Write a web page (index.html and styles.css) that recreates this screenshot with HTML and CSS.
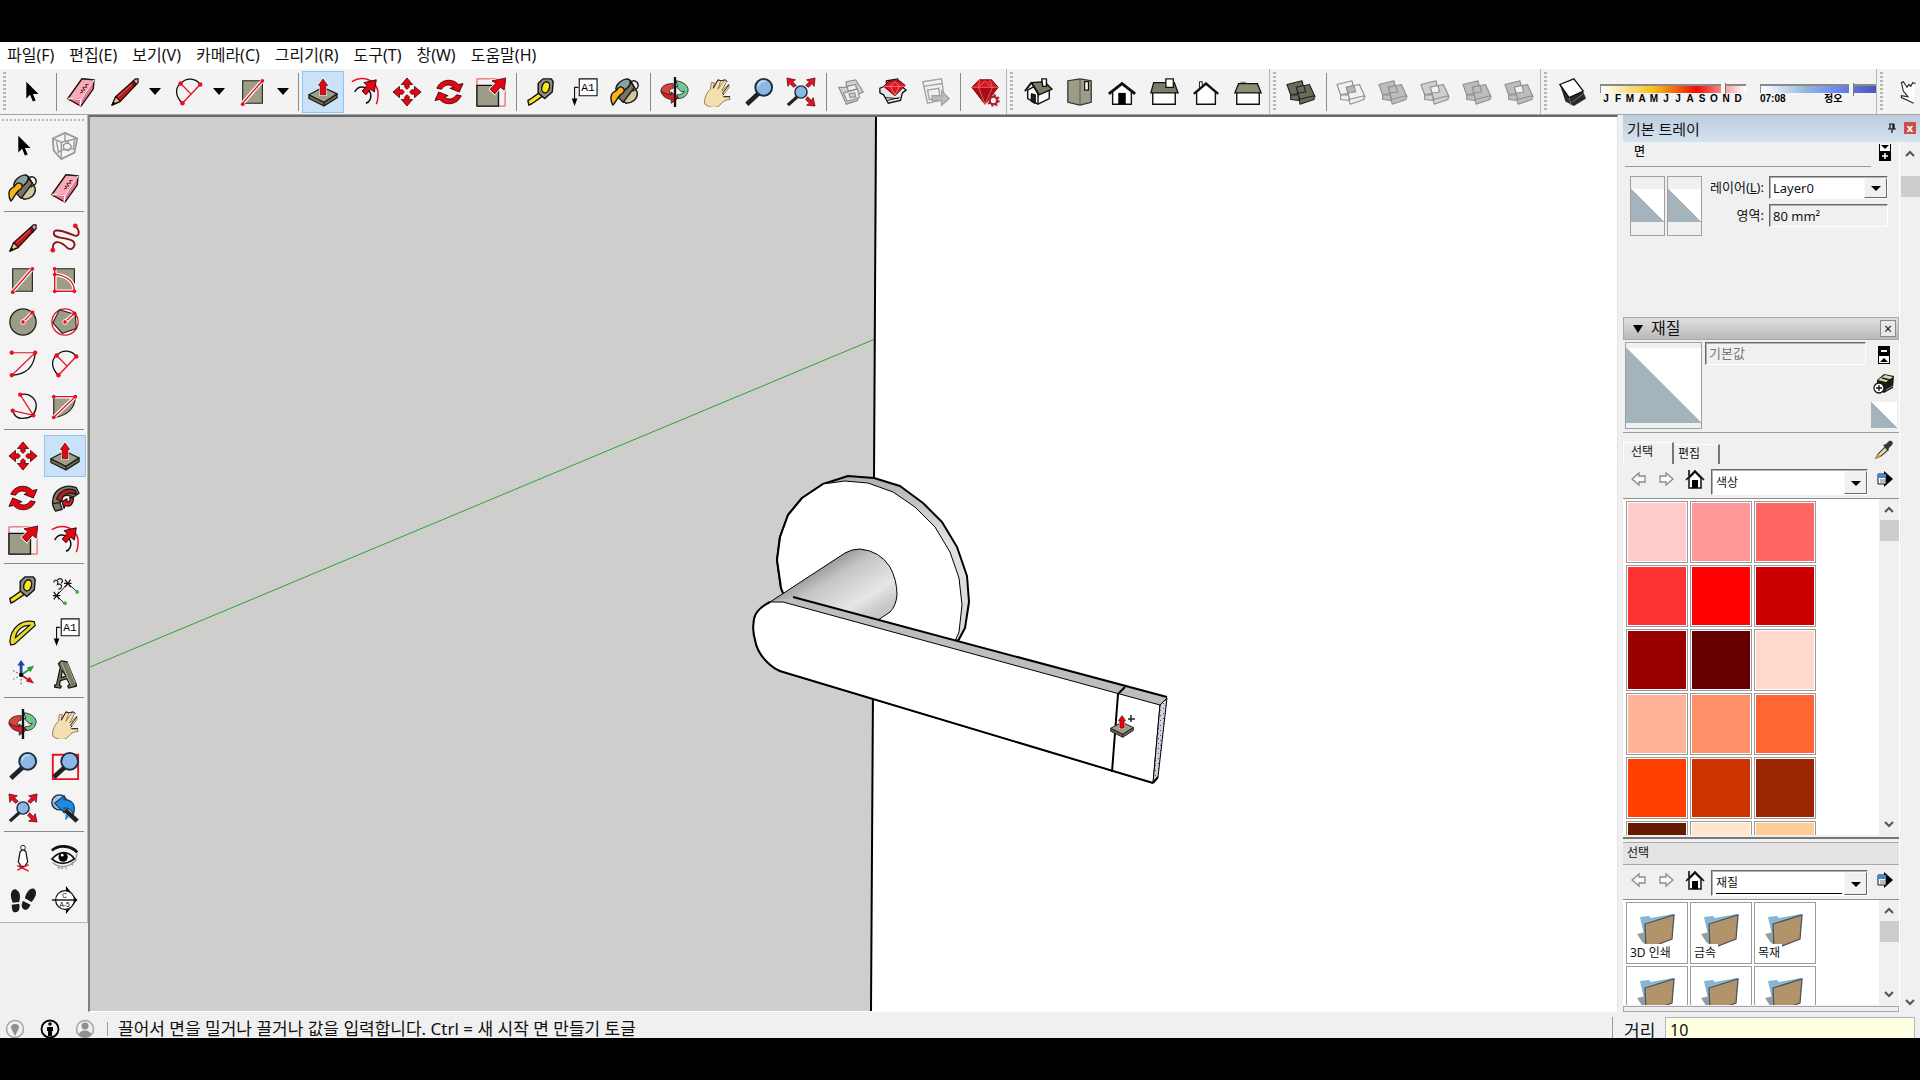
FILE: index.html
```
<!DOCTYPE html>
<html lang="ko">
<head>
  <meta charset="UTF-8" />
  <meta name="viewport" content="width=device-width, initial-scale=1.0" />
  <title>SketchUp</title>
  <link rel="stylesheet" href="styles.css">
</head>
<body>
  <!-- Icon sprite -->
  <svg class="sprite" aria-hidden="true">
    <defs>
      <linearGradient id="knobShade" gradientUnits="userSpaceOnUse" x1="812" y1="565" x2="850" y2="628">
        <stop offset="0" stop-color="#8a8a8a"/><stop offset=".3" stop-color="#c4c4c4"/><stop offset=".75" stop-color="#e6e6e6"/><stop offset="1" stop-color="#c8c8c8"/>
      </linearGradient>
      <linearGradient id="rimShade" x1="0" y1="0" x2="0" y2="1">
        <stop offset="0" stop-color="#b0b0b0"/><stop offset=".4" stop-color="#e2e2e2"/><stop offset="1" stop-color="#d8d8d8"/>
      </linearGradient>
      <pattern id="dots" width="5" height="5" patternUnits="userSpaceOnUse">
        <rect width="5" height="5" fill="#d2d2da"/><path d="M0 0h1v1h-1zM3 3h1v1h-1z" fill="#4a4aa8"/>
      </pattern>
    </defs>

    <symbol id="i-select" viewBox="0 0 32 32"><path d="M11 5v18l4-4 3 7 3-1-3-7h6z" fill="#000"/></symbol>
    <symbol id="i-component" viewBox="0 0 32 32"><g fill="none" stroke="#9b9b9b" stroke-width="2"><path d="M3 8l13-6 13 6-3 15-14 7-8-9z"/><path d="M3 8l9 4 17-4M12 12v18M7 11l2 12 4-3 12-1 1-9M16 3v8M14 15l5-3 4 4-3 5-5-1z" stroke-width="1.500"/></g></symbol>
    <symbol id="i-eraser" viewBox="0 0 32 32"><g stroke="#1c1014" stroke-width="1.400" stroke-linejoin="round"><path d="M2 23L17 2l13 1-1 10-13 18-13-7z" fill="#f66f8b"/><path d="M2 23L17 2l13 1-14 21z" fill="#f9a9b9"/><path d="M16 24l-1 7" stroke="#fff"/></g><path d="M2 23l14 1L30 3" fill="none" stroke="#ffe1e6" stroke-width="1.500"/><path d="M15 17l3-1-2-2 4 0-2-3 4 0-1-3 3 0" fill="none" stroke="#53202c"/></symbol>
    <symbol id="i-pencil" viewBox="0 0 32 32"><g stroke="#160808" stroke-width="1.200" stroke-linejoin="round"><path d="M2 30l4-9L25 4l3 4-17 18z" fill="#b71b1f"/><path d="M2 30l4-9 5 5z" fill="#dfc38d"/><path d="M25 4l2-2 3 0v4l-2 2z" fill="#d5a69c"/><path d="M23 6l4 4"/></g><path d="M9 21L24 7" stroke="#ef5b53"/><path d="M2 30l2-4 2 2z"/></symbol>
    <symbol id="i-freehand" viewBox="0 0 32 32"><path d="M27 3c6 6 4 13-2 10C15 9 4 5 4 11c0 6 13 4 20 8 5 4 0 11-5 8C9 17 2 19 3 29" fill="none" stroke="#8a1216" stroke-width="2"/><circle cx="27" cy="3" r="2.500" fill="#e81123"/><circle cx="3" cy="29" r="2.500" fill="#e81123"/></symbol>
    <symbol id="i-rect" viewBox="0 0 32 32"><path d="M5 4h21v24H5z" fill="#9d9c87" stroke="#222" stroke-width="1.200"/><path d="M5 28L26 4" stroke="#fff" stroke-width="4"/><path d="M5 28L26 4" stroke="#e81123" stroke-width="1.500"/><circle cx="5" cy="29" r="2" fill="#e81123"/><circle cx="26" cy="4" r="2" fill="#e81123"/></symbol>
    <symbol id="i-rrect" viewBox="0 0 32 32"><path d="M5 4h21v24H5z" fill="#9d9c87" stroke="#222" stroke-width="1.200"/><path d="M5 4v24h21c0-11-9-17-21-18" fill="none" stroke="#fff" stroke-width="4"/><path d="M5 4v24h21c0-11-9-17-21-18" fill="none" stroke="#e81123" stroke-width="1.500"/><g fill="#e81123"><circle cx="5" cy="4" r="2"/><circle cx="5" cy="10" r="2"/><circle cx="5" cy="28" r="2"/><circle cx="26" cy="28" r="2"/></g></symbol>
    <symbol id="i-circle" viewBox="0 0 32 32"><circle cx="16" cy="16" r="14" fill="#9d9c87" stroke="#222" stroke-width="1.400"/><path d="M16 16l10-10" stroke="#fff" stroke-width="4"/><path d="M16 16l10-10" stroke="#e81123" stroke-width="1.500"/><circle cx="16" cy="16" r="2.500" fill="#e81123" stroke="#fff"/><circle cx="26" cy="6" r="2.300" fill="#e81123"/></symbol>
    <symbol id="i-polygon" viewBox="0 0 32 32"><circle cx="16" cy="16" r="14" fill="#fff" stroke="#e81123" stroke-width="1.400"/><path d="M10 3l17 5 1 15-15 5L3 17z" fill="#9d9c87" stroke="#222" stroke-width="1.200"/><path d="M16 16l10-9" stroke="#fff" stroke-width="4"/><path d="M16 16l10-9" stroke="#e81123" stroke-width="1.500"/><circle cx="16" cy="16" r="2.500" fill="#e81123" stroke="#fff"/><circle cx="26" cy="7" r="2.300" fill="#e81123"/></symbol>
    <symbol id="i-arc" viewBox="0 0 32 32"><path d="M29 4C28 18 20 27 4 28" fill="none" stroke="#111" stroke-width="1.400"/><path d="M4 4h25L4 28" fill="none" stroke="#e81123" stroke-width="1.200"/><g fill="#e81123"><circle cx="4" cy="4" r="2.300"/><circle cx="29" cy="4" r="2.300"/><circle cx="4" cy="28" r="2.300"/></g></symbol>
    <symbol id="i-arc2" viewBox="0 0 32 32"><path d="M9 28C-1 18 3 10 7 7 13 0 23 1 28 8" fill="none" stroke="#111" stroke-width="1.400"/><path d="M9 28L28 8M7 7l11 11" stroke="#e81123" stroke-width="1.500"/><g fill="#e81123"><circle cx="9" cy="28" r="2.400"/><circle cx="28" cy="8" r="2.400"/><circle cx="7" cy="7" r="2.400"/></g></symbol>
    <symbol id="i-arc3" viewBox="0 0 32 32"><path d="M13 4c11-3 18 6 17 13-1 8-6 12-13 12C11 30 7 27 5 21" fill="none" stroke="#111" stroke-width="1.400"/><path d="M13 4l14 22L5 21" fill="none" stroke="#e81123" stroke-width="1.400"/><g fill="#e81123"><circle cx="13" cy="4" r="2.300"/><circle cx="27" cy="26" r="2.300"/><circle cx="5" cy="21" r="2.300"/></g></symbol>
    <symbol id="i-pie" viewBox="0 0 32 32"><path d="M4 6h23c0 12-9 21-23 22z" fill="#9d9c87" stroke="#222" stroke-width="1.200"/><path d="M4 6h23L4 28" fill="none" stroke="#fff" stroke-width="4"/><path d="M4 6h23L4 28" fill="none" stroke="#e81123" stroke-width="1.400"/><g fill="#e81123"><circle cx="4" cy="6" r="2"/><circle cx="27" cy="6" r="2"/><circle cx="4" cy="28" r="2"/></g></symbol>
    <symbol id="i-pushpull" viewBox="0 0 32 32"><g stroke="#1b1b14" stroke-width="1.300" stroke-linejoin="round"><path d="M1 19v4l16 8 14-9v-4L17 27z" fill="#6f6d5a"/><path d="M1 19l15-8 15 7-14 9z" fill="#a09e88"/><path d="M17 27v4"/></g><path d="M16 2l5 7h-2v10h-6V9h-2z" fill="#e30613" stroke="#fff" stroke-width="2"/><path d="M16 2l5 7h-2v10h-6V9h-2z" fill="#e30613" stroke="#400" stroke-width=".7"/></symbol>
    <symbol id="i-followme" viewBox="0 0 32 32"><g stroke="#1b1b14" stroke-width="1.400" stroke-linejoin="round"><path d="M3 18C4 7 17 0 28 5l3 6-6 4C17 11 10 14 11 22l2 6-7 2C3 26 2 22 3 18z" fill="#7b7967"/><path d="M7 17C11 7 20 5 27 8l1 4C18 9 12 13 13 20z" fill="#c41a20"/><path d="M13 20l5-3v3c3 1 4-2 3-5l4 1c0 7-4 10-9 8l-1 3z" fill="#e81123"/><path d="M3 22l8-1"/></g></symbol>
    <symbol id="i-offset" viewBox="0 0 32 32"><path d="M2 5C14-3 28 4 30 16c0 5 0 9-2 13" fill="none" stroke="#e81123" stroke-width="1.600"/><path d="M5 16c5-9 15-5 17 2 1 4-1 9-5 10" fill="none" stroke="#111" stroke-width="1.600"/><path d="M28 3l-2 13-4-3-5 6-4-4 5-6-3-3z" fill="#e30613" stroke="#300" stroke-width="1"/></symbol>
    <symbol id="i-move" viewBox="0 0 32 32"><g fill="#e30613" stroke="#300" stroke-width=".8"><path d="M16 1l6 7h-4l1 5h-6l1-5h-4zM16 31l6-7h-4l1-5h-6l1 5h-4zM1 16l7-6v4l5-1v6l-5-1v4zM31 16l-7-6v4l-5-1v6l5-1v4z"/></g><path d="M11 11l10 10M21 11l-10 10" stroke="#f3f3f3" stroke-width="3"/></symbol>
    <symbol id="i-rotate" viewBox="0 0 32 32"><g fill="#e30613" stroke="#300" stroke-width=".9"><path d="M3 12C7 2 20 1 26 8l5-1-4 9-10-4 4-1C17 7 11 8 8 13z"/><path d="M29 20C25 30 12 31 6 24l-5 1 4-9 10 4-4 1c4 4 10 3 13-2z"/></g></symbol>
    <symbol id="i-scale" viewBox="0 0 32 32"><path d="M1 2h30v29H1z" fill="none" stroke="#e53b45" stroke-width="1"/><path d="M1 9h23v22H1z" fill="#9d9c87" stroke="#111" stroke-width="1.400"/><path d="M32 1l-2 13-4-3-6 7-5-5 6-6-4-3z" fill="#e30613" stroke="#fff" stroke-width="2.500"/><path d="M32 1l-2 13-4-3-6 7-5-5 6-6-4-3z" fill="#e30613" stroke="#300" stroke-width=".8"/></symbol>
    <symbol id="i-tape" viewBox="0 0 32 32"><g stroke="#111" stroke-width="1.500" stroke-linejoin="round"><path d="M4 24l10-7 3 4-10 7-4 2-1-5z" fill="#f5e51b"/><path d="M13 17V7l5-5h9l2 3-1 11-8 7z" fill="#8d8d86"/><ellipse cx="21" cy="11" rx="4" ry="6" fill="#f5ea1c" transform="rotate(18 21 11)"/></g></symbol>
    <symbol id="i-paint" viewBox="0 0 32 32"><g stroke="#16160f" stroke-width="1.500" stroke-linejoin="round"><path d="M9 9l13-5 7 12c1 8-6 12-12 12l-8-7z" fill="#cfc8a3"/><path d="M21 4l5 7-12 16-5-5z" fill="#77746a"/><ellipse cx="14" cy="9" rx="9" ry="5" transform="rotate(-38 14 9)" fill="#8aa3a6"/><path d="M6 15C0 17 0 24 3 30c4-4 5-10 11-13 2-3 1-5-1-6-3-2-4 1-7 4z" fill="#f8b41a"/><path d="M21 7c3-5 8-3 9 1 1 5-4 6-6 7" fill="none"/></g></symbol>
    <symbol id="i-dimension" viewBox="0 0 32 32"><path d="M7 22L19 9l10 9M7 22l9 9" fill="none" stroke="#111"/><path d="M4 18l6 8M10 18l-6 8M3 22h8M16 5l6 8M22 5l-6 8M15 9h8" stroke="#111" stroke-width="1.300"/><path d="M4 8c0-4 6-3 4 2 5-2 6 5 1 5M8 5c4-3 7 1 4 4" fill="none" stroke="#222" stroke-width="1.300"/><circle cx="29" cy="18" r="2" fill="#3bb143"/><circle cx="16" cy="30" r="2" fill="#3bb143"/></symbol>
    <symbol id="i-protractor" viewBox="0 0 32 32"><path d="M2 26C3 12 14 2 28 5l1 4L7 29l-4 1zM8 22L23 9c-8 0-14 5-15 13z" fill="#e8dc28" fill-rule="evenodd" stroke="#111" stroke-width="1.300"/></symbol>
    <symbol id="i-axes" viewBox="0 0 32 32"><path d="M14 17V5" stroke="#1a49a8" stroke-width="3"/><path d="M10 7l4-6 4 6z" fill="#1a49a8"/><path d="M14 17l9-6" stroke="#2e9c45" stroke-width="2"/><path d="M20 9l8-2-4 7z" fill="#2e9c45"/><path d="M14 17l9 6" stroke="#c81520" stroke-width="2"/><path d="M23 19l5 7-9-2z" fill="#c81520"/><path d="M14 17L5 12" stroke="#c81520" stroke-dasharray="2 2"/><path d="M14 17l-9 5" stroke="#2e9c45" stroke-dasharray="2 2"/><path d="M14 17v12" stroke="#1a49a8" stroke-dasharray="2 2"/><circle cx="14" cy="17" r="2.300"/></symbol>
    <symbol id="i-text3d" viewBox="0 0 32 32"><path d="M12 2l6 1 10 24 0 2-8 2-1-2 2-2-3-6-7 2-1 5 2 1-1 2-6-1 0-2 2-1L11 9 9 5zM13 12l-1 8 5-2z" fill="#7a7968" fill-rule="evenodd" stroke="#1a1a14" stroke-width="1.400"/><path d="M12 3l10 24M18 4l9 22" stroke="#b5b3a2"/></symbol>
    <symbol id="i-orbit" viewBox="0 0 32 32"><g stroke="#222" stroke-width=".9"><path d="M14 7C6 7 1 10 1 15l7 5 5-2-3-2c0-3 2-4 4-4z" fill="#d8453c"/><path d="M17 4c8 1 13 5 13 10-1 7-6 9-12 9v-4c4 0 7-1 8-4l-3 1-6-6h2z" fill="#6fc893"/><path d="M1 15c1 5 5 8 11 9v4l8-6-8-6v3C7 18 3 17 1 15z" fill="#d81e2c"/></g><path d="M16 0v32" stroke="#111" stroke-width="2.500"/></symbol>
    <symbol id="i-pan" viewBox="0 0 32 32"><path d="M3 29c-1-7 2-12 6-16l1-7 3 0-1 6 5-9 3 1-3 9 7-10 2 2-5 10 7-7 1 3-7 9 1 1 6 0 1 3c-5 0-8 2-11 6-3 3-9 4-16-1z" fill="#f3dfb0" stroke="#8c7a4c" stroke-width="1"/><path d="M12 12l5-9 3 1M20 4l5-1 2 2M29 8l-7 9 1 2M23 21l7 0" fill="none" stroke="#111"/></symbol>
    <symbol id="i-zoom" viewBox="0 0 32 32"><path d="M3 29L16 17" stroke="#222" stroke-width="5"/><circle cx="21" cy="11" r="9" fill="#8cb6e4" stroke="#1b2b3b" stroke-width="2"/><path d="M15 10c1-4 4-6 8-5" fill="none" stroke="#bcd8f4" stroke-width="2"/></symbol>
    <symbol id="i-zoomwin" viewBox="0 0 32 32"><path d="M3 4h27v26H3z" fill="none" stroke="#e81123" stroke-width="2"/><path d="M4 28L16 17" stroke="#222" stroke-width="5"/><circle cx="21" cy="11" r="9" fill="#8cb6e4" stroke="#1b2b3b" stroke-width="2"/></symbol>
    <symbol id="i-zoomext" viewBox="0 0 32 32"><path d="M2 30l10-9" stroke="#222" stroke-width="3.500"/><circle cx="16" cy="16" r="6.500" fill="#8cb6e4" stroke="#1b2b3b" stroke-width="1.500"/><path d="M1 1l9 2-3 2 4 4-3 2-4-4-2 3zM31 1l-9 2 3 2-4 4 3 2 4-4 2 3zM31 31l-2-9-2 3-4-4-2 3 4 4-3 2z" fill="#e81123" stroke="#400" stroke-width=".7"/></symbol>
    <symbol id="i-prev" viewBox="0 0 32 32"><circle cx="10" cy="10" r="8" fill="#a8c4dd" stroke="#1b2b3b" stroke-width="1.500"/><path d="M16 18l13 12" stroke="#222" stroke-width="5"/><path d="M5 11L15 3v4c9 0 13 6 10 16-2-6-5-7-10-7v5z" fill="#1e8be0" stroke="#0d3d6b" stroke-width="1.200"/><path d="M17 21l-1 8 4-3" fill="#1e8be0"/></symbol>
    <symbol id="i-position" viewBox="0 0 32 32"><path d="M13 9l3-2 3 2 2 11-3 5h-4l-3-5z" fill="#fff" stroke="#111" stroke-width="1.300"/><circle cx="16" cy="5" r="2.500" fill="#fff" stroke="#111"/><path d="M10 29l12-6M10 24l12 6" stroke="#e81123" stroke-width="1.500"/></symbol>
    <symbol id="i-look" viewBox="0 0 32 32"><path d="M2 8C10 1 23 3 29 10" fill="none" stroke="#111" stroke-width="3"/><path d="M2 17c8-9 18-9 24 0-7 5-16 7-24 0z" fill="#fff" stroke="#111" stroke-width="1.800"/><circle cx="14" cy="15" r="5"/><circle cx="13" cy="13" r="1.500" fill="#fff"/><path d="M3 21c7 6 17 6 25-3M8 26l3 1M13 25v3M17 26v2M24 20v4M29 11l-2 8" fill="none" stroke="#999" stroke-width="1.500"/></symbol>
    <symbol id="i-walk" viewBox="0 0 32 32"><g fill="#1b1b1b"><path d="M4 16C1 7 6 3 9 5c5 3 4 9 3 13l-7 1z"/><path d="M4 21l8-1c1 5 0 9-4 9-3 1-4-3-4-8z"/><path d="M18 14c1-6 6-12 10-10 4 4 1 10-3 14z"/><path d="M16 17l8 4c-2 5-4 6-7 5-3-2-3-5-1-9z"/></g></symbol>
    <symbol id="i-wh1" viewBox="0 0 32 32"><g fill="#d0d0d0" stroke="#8f8f8f" stroke-width="1.300"><path d="M3 11l8 0 0-6 10-2 3 5 5 8-5 2-1 7-12 4-4-9z"/><path d="M8 17l15-4 2 9-13 4zM12 10l9-2 1 5-9 2z" fill="#eee"/><path d="M14 18l6-1 1 4-6 1z"/></g></symbol>
    <symbol id="i-wh2" viewBox="0 0 32 32"><path d="M2 12l7-3 0-5 12-2 2 6 7 6-4 3-2 8-13 3-5-9-4-2z" fill="#e5e5e5" stroke="#111" stroke-width="1.400"/><path d="M6 10l6-6h11l6 5-11 11z" fill="#d8141f" stroke="#500" stroke-width="1"/><path d="M6 10h23M13 10l5 9 5-9M13 10l5-5 5 5" fill="none" stroke="#ff7b7b"/><path d="M8 22l14 1M10 25l13-3" stroke="#111"/></symbol>
    <symbol id="i-extwh" viewBox="0 0 32 32"><g fill="#f0f0f0" stroke="#a3a3a3" stroke-width="1.500"><path d="M3 5l20-3 3 22-18 4z"/><path d="M4 10l20-3M8 14l12-2 1 10-11 2z"/><path d="M13 20h10v-5l8 8-8 7v-5H13z" fill="#bcbcbc"/></g></symbol>
    <symbol id="i-ruby" viewBox="0 0 32 32"><path d="M2 11l8-8h13l7 8-14 18z" fill="#d8141f" stroke="#500" stroke-width="1"/><path d="M2 11h28L16 29z" fill="#a80d16"/><path d="M2 11h28M10 3l-1 8 7 18 8-18-3-8M9 11l7-7 7 7" fill="none" stroke="#f46a6a" stroke-width=".9"/><circle cx="25" cy="25" r="4" fill="#f3f3f3" stroke="#b3202a" stroke-width="2.500"/><circle cx="25" cy="25" r="5.800" fill="none" stroke="#b3202a" stroke-width="2" stroke-dasharray="2.200 2.300"/></symbol>

    <symbol id="i-iso" viewBox="0 0 32 32"><g stroke="#111" stroke-width="1.500" stroke-linejoin="round"><path d="M5 14v9l11 6 12-6v-9L14 9z" fill="#fff"/><path d="M16 18v11M9 18v8l4 2v-9z" fill="#222"/><path d="M9 6l14-1 8 8-14 6z" fill="#7d7c67"/><path d="M20 2h5v8h-4z" fill="#fff"/><path d="M2 15l7-9 8 13" fill="none" stroke-width="2"/></g></symbol>
    <symbol id="i-top" viewBox="0 0 32 32"><path d="M3 4l13-2 12 2v23l-12 3-13-3z" fill="#9d9c87" stroke="#333" stroke-width="1.300"/><path d="M16 2v28" stroke="#555"/><path d="M21 5h4v9h-4z" fill="#fff" stroke="#111" stroke-width="1.300"/></symbol>
    <symbol id="i-front" viewBox="0 0 32 32"><path d="M6 15L16 7l10 8v14H6z" fill="#fff" stroke="#111" stroke-width="1.500"/><path d="M12 17h8v12h-8z"/><path d="M2 18L16 7l14 11" fill="none" stroke="#111" stroke-width="3"/></symbol>
    <symbol id="i-back" viewBox="0 0 32 32"><path d="M4 16h24v13H4z" fill="#fff" stroke="#111" stroke-width="1.500"/><path d="M5 6h22l4 11H2z" fill="#7d7c67" stroke="#111" stroke-width="1.400"/><path d="M18 2h8v9h-8z" fill="#fff" stroke="#111" stroke-width="1.400"/></symbol>
    <symbol id="i-right" viewBox="0 0 32 32"><path d="M9 5h3v8H9z" fill="#fff" stroke="#111"/><path d="M6 16L16 7l10 9v13H6z" fill="#fff" stroke="#111" stroke-width="1.500"/><path d="M3 18L16 7l13 11" fill="none" stroke="#111" stroke-width="2.500"/></symbol>
    <symbol id="i-left" viewBox="0 0 32 32"><path d="M8 5h6v3H8z" fill="#888"/><path d="M4 16h24v13H4z" fill="#fff" stroke="#111" stroke-width="1.500"/><path d="M6 7h20l4 10H2z" fill="#8d8c77" stroke="#111" stroke-width="1.400"/></symbol>
    <symbol id="i-solid" viewBox="0 0 32 32"><g fill="currentColor" stroke="#222" stroke-width="1.200" stroke-linejoin="round"><path d="M1 8l16-4 3 12-15 3z"/><path d="M5 19v5l9 1v-6z"/><path d="M11 11l14-3 6 13-16 4z"/><path d="M14 24l16-4v4l-15 5z"/><path d="M11 11l8-2 2 7-8 1z"/></g></symbol>
    <symbol id="i-solid-off" viewBox="0 0 32 32"><g fill="currentColor" stroke="#8f8f8f" stroke-width="1.200" stroke-linejoin="round"><path d="M1 8l16-4 3 12-15 3z"/><path d="M5 19v5l9 1v-6z"/><path d="M11 11l14-3 6 13-16 4z"/><path d="M14 24l16-4v4l-15 5z"/><path d="M11 11l8-2 2 7-8 1z" class="core"/></g></symbol>
    <symbol id="i-shadow" viewBox="0 0 32 32"><path d="M3 8l6 18 9 5 13-8-3-7z" fill="#2a2a2a"/><path d="M3 8l15-6 10 13-15 7z" fill="#fff" stroke="#111" stroke-width="1.400"/><path d="M13 22l2 8M16 27l12-9" stroke="#777"/></symbol>
    <symbol id="i-hand" viewBox="0 0 16 32"><path d="M14 28l-6-3-7-3 0-2 7 1-5-6-2-9 2-1 4 6 2-3 2 2 2-4 3 1" fill="#fff" stroke="#222" stroke-width="1.200"/></symbol>

    <symbol id="i-back-arrow" viewBox="0 0 16 16"><path d="M1 8l7-6v3h6v6H8v3z" fill="#f8f8f8" stroke="#8a8a8a" stroke-width="1.300"/></symbol>
    <symbol id="i-fwd-arrow" viewBox="0 0 16 16"><path d="M15 8L8 2v3H2v6h6v3z" fill="#f8f8f8" stroke="#8a8a8a" stroke-width="1.300"/></symbol>
    <symbol id="i-home" viewBox="0 0 20 20"><path d="M4 9l6-6 6 6v10H4z" fill="#fff" stroke="#111" stroke-width="1.500"/><path d="M1 11l9-9 9 9M4 7V1" fill="none" stroke="#111" stroke-width="1.600"/><path d="M7 11h6v8H7z"/></symbol>
    <symbol id="i-detail" viewBox="0 0 18 18"><path d="M8 1l9 8-9 8z"/><path d="M2 4h8v10H2z" fill="#fff" stroke="#111"/><path d="M2 4h8v4H2z" fill="#3d86d8"/><path d="M4 10h5M4 12h5" stroke="#777"/></symbol>
    <symbol id="i-dropper" viewBox="0 0 20 20"><path d="M2 18l2-4 7-7 3 3-7 6z" fill="#eadfae" stroke="#444" stroke-width="1.200"/><path d="M1 19l3-5 3 2z" fill="#d9a520"/><path d="M9 5l3-1 3-3c3-1 5 2 3 4l-3 3-1 3z" fill="#383838"/></symbol>
    <symbol id="i-newmat" viewBox="0 0 22 22"><path d="M4 8l7-6 10 2-1 12-9 5-7-4z" fill="#1c1c14"/><path d="M5 8l7-5 8 2-7 5z" fill="#d9d6a8"/><path d="M9 6l8 2M12 15l8-5" stroke="#1c1c14" stroke-width="1.500"/><path d="M13 18l7-4" stroke="#96937a"/><circle cx="6" cy="16" r="5" fill="#fff" stroke="#111" stroke-width="1.300"/><path d="M3 16h6M6 13v6" stroke="#111" stroke-width="1.300"/></symbol>
    <symbol id="i-folder" viewBox="0 0 40 36"><path d="M1 20l9-2 4 14-7-3z" fill="#9b9b9b"/><path d="M4 3l9-1 2 2 22-4-3 26-24 4z" fill="#86b6d3"/><path d="M9 10l29-9-2 24-26 10z" fill="#b1946c" stroke="#4a5459" stroke-width="1.300"/></symbol>
    <symbol id="i-chev-up" viewBox="0 0 12 12"><path d="M2 8l4-4 4 4" fill="none" stroke="#555" stroke-width="2"/></symbol>
    <symbol id="i-chev-down" viewBox="0 0 12 12"><path d="M2 4l4 4 4-4" fill="none" stroke="#555" stroke-width="2"/></symbol>
    <symbol id="i-pin" viewBox="0 0 10 12"><path d="M2 2h5M3 2v5M6 2v5M7 2v5M1 7h8M5 7v4" fill="none" stroke="#111" stroke-width="1.200"/></symbol>
    <symbol id="i-expand" viewBox="0 0 12 17"><path d="M0 0h12v17H0z"/><path d="M1 0h10v7H1z" fill="#fff"/><path d="M2 1h8L6 5z"/><path d="M3 12h6M6 9v6" stroke="#fff" stroke-width="1.500"/></symbol>
    <symbol id="i-collapse" viewBox="0 0 12 18"><path d="M0 0h12v18H0z"/><path d="M1 10h10v7H1z" fill="#fff"/><path d="M2 16h8l-4-4z"/><path d="M3 5h6" stroke="#fff" stroke-width="2"/></symbol>
  </svg>

  <div class="app">
    <nav class="menu">
      <button type="button">파일(F)</button>
      <button type="button">편집(E)</button>
      <button type="button">보기(V)</button>
      <button type="button">카메라(C)</button>
      <button type="button">그리기(R)</button>
      <button type="button">도구(T)</button>
      <button type="button">창(W)</button>
      <button type="button">도움말(H)</button>
    </nav>

    <div class="toolbar">
      <div class="group">
        <span class="grip"></span>
        <button class="tool" aria-label="선택"><svg><use href="#i-select"/></svg></button>
        <span class="sep"></span>
        <button class="tool" aria-label="지우개"><svg><use href="#i-eraser"/></svg></button>
        <button class="tool split" aria-label="선"><svg><use href="#i-pencil"/></svg></button>
        <button class="tool split" aria-label="호"><svg><use href="#i-arc2"/></svg></button>
        <button class="tool split" aria-label="직사각형"><svg><use href="#i-rect"/></svg></button>
        <span class="sep"></span>
        <button class="tool active" aria-label="밀기/끌기"><svg><use href="#i-pushpull"/></svg></button>
        <button class="tool" aria-label="오프셋"><svg><use href="#i-offset"/></svg></button>
        <button class="tool" aria-label="이동"><svg><use href="#i-move"/></svg></button>
        <button class="tool" aria-label="회전"><svg><use href="#i-rotate"/></svg></button>
        <button class="tool" aria-label="배율"><svg><use href="#i-scale"/></svg></button>
        <span class="sep"></span>
        <button class="tool" aria-label="줄자"><svg><use href="#i-tape"/></svg></button>
        <button class="tool" aria-label="텍스트"><svg viewBox="0 0 32 32"><path d="M12 2h19v18H12z" fill="#fff" stroke="#111" stroke-width="1.200"/><path d="M11 11H7v14" fill="none" stroke="#111" stroke-width="1.200"/><path d="M4 23h6l-3 8z"/><text x="14" y="15" class="a1">A1</text></svg></button>
        <button class="tool" aria-label="페인트"><svg><use href="#i-paint"/></svg></button>
        <span class="sep"></span>
        <button class="tool" aria-label="궤도"><svg><use href="#i-orbit"/></svg></button>
        <button class="tool" aria-label="이동 보기"><svg><use href="#i-pan"/></svg></button>
        <button class="tool" aria-label="확대/축소"><svg><use href="#i-zoom"/></svg></button>
        <button class="tool" aria-label="전체 보기"><svg><use href="#i-zoomext"/></svg></button>
        <span class="sep"></span>
        <button class="tool" aria-label="모델 공유"><svg><use href="#i-wh1"/></svg></button>
        <button class="tool" aria-label="3D Warehouse"><svg><use href="#i-wh2"/></svg></button>
        <button class="tool" aria-label="구성 요소 공유"><svg><use href="#i-extwh"/></svg></button>
        <span class="sep"></span>
        <button class="tool" aria-label="확장 프로그램"><svg><use href="#i-ruby"/></svg></button>
      </div>
      <div class="group">
        <span class="grip"></span>
        <button class="tool" aria-label="등각"><svg><use href="#i-iso"/></svg></button>
        <button class="tool" aria-label="상단"><svg><use href="#i-top"/></svg></button>
        <button class="tool" aria-label="전면"><svg><use href="#i-front"/></svg></button>
        <button class="tool" aria-label="오른쪽"><svg><use href="#i-back"/></svg></button>
        <button class="tool" aria-label="뒤"><svg><use href="#i-right"/></svg></button>
        <button class="tool" aria-label="왼쪽"><svg><use href="#i-left"/></svg></button>
      </div>
      <div class="group">
        <span class="grip"></span>
        <button class="tool shell" aria-label="외부 셸"><svg><use href="#i-solid"/></svg></button>
        <span class="sep"></span>
        <button class="tool off wire" aria-label="교차"><svg><use href="#i-solid-off"/></svg></button>
        <button class="tool off" aria-label="결합"><svg><use href="#i-solid-off"/></svg></button>
        <button class="tool off light" aria-label="빼기"><svg><use href="#i-solid-off"/></svg></button>
        <button class="tool off" aria-label="자르기"><svg><use href="#i-solid-off"/></svg></button>
        <button class="tool off hole" aria-label="분할"><svg><use href="#i-solid-off"/></svg></button>
      </div>
      <div class="group shadows">
        <span class="grip"></span>
        <button class="tool" aria-label="그림자"><svg><use href="#i-shadow"/></svg></button>
        <div class="slider date">
          <input type="range" min="0" max="100" value="86" aria-label="날짜">
          <div class="months"><span>J</span><span>F</span><span>M</span><span>A</span><span>M</span><span>J</span><span>J</span><span>A</span><span>S</span><span>O</span><span>N</span><span>D</span></div>
        </div>
        <div class="slider time">
          <input type="range" min="0" max="100" value="80" aria-label="시간">
          <div class="hours"><span>07:08</span><span>정오</span></div>
        </div>
      </div>
      <div class="group last">
        <span class="grip"></span>
        <button class="tool" aria-label="상호 작용"><svg><use href="#i-hand"/></svg></button>
      </div>
    </div>

    <div class="workspace">
      <div class="side">
        <div class="toolbox">
          <span class="hgrip"></span>
          <div class="rows">
            <button class="tool" aria-label="선택"><svg><use href="#i-select"/></svg></button>
            <button class="tool" aria-label="구성 요소 만들기"><svg><use href="#i-component"/></svg></button>
            <button class="tool" aria-label="페인트 통"><svg><use href="#i-paint"/></svg></button>
            <button class="tool" aria-label="지우개"><svg><use href="#i-eraser"/></svg></button>
            <hr>
            <button class="tool" aria-label="선"><svg><use href="#i-pencil"/></svg></button>
            <button class="tool" aria-label="자유 그리기"><svg><use href="#i-freehand"/></svg></button>
            <button class="tool" aria-label="직사각형"><svg><use href="#i-rect"/></svg></button>
            <button class="tool" aria-label="회전된 직사각형"><svg><use href="#i-rrect"/></svg></button>
            <button class="tool" aria-label="원"><svg><use href="#i-circle"/></svg></button>
            <button class="tool" aria-label="다각형"><svg><use href="#i-polygon"/></svg></button>
            <button class="tool" aria-label="호"><svg><use href="#i-arc"/></svg></button>
            <button class="tool" aria-label="2점 호"><svg><use href="#i-arc2"/></svg></button>
            <button class="tool" aria-label="3점 호"><svg><use href="#i-arc3"/></svg></button>
            <button class="tool" aria-label="파이"><svg><use href="#i-pie"/></svg></button>
            <hr>
            <button class="tool" aria-label="이동"><svg><use href="#i-move"/></svg></button>
            <button class="tool active" aria-label="밀기/끌기"><svg><use href="#i-pushpull"/></svg></button>
            <button class="tool" aria-label="회전"><svg><use href="#i-rotate"/></svg></button>
            <button class="tool" aria-label="따라가기"><svg><use href="#i-followme"/></svg></button>
            <button class="tool" aria-label="배율"><svg><use href="#i-scale"/></svg></button>
            <button class="tool" aria-label="오프셋"><svg><use href="#i-offset"/></svg></button>
            <hr>
            <button class="tool" aria-label="줄자"><svg><use href="#i-tape"/></svg></button>
            <button class="tool" aria-label="치수"><svg><use href="#i-dimension"/></svg></button>
            <button class="tool" aria-label="각도기"><svg><use href="#i-protractor"/></svg></button>
            <button class="tool" aria-label="텍스트"><svg viewBox="0 0 32 32"><path d="M12 2h19v18H12z" fill="#fff" stroke="#111" stroke-width="1.200"/><path d="M11 11H7v14" fill="none" stroke="#111" stroke-width="1.200"/><path d="M4 23h6l-3 8z"/><text x="14" y="15" class="a1">A1</text></svg></button>
            <button class="tool" aria-label="축"><svg><use href="#i-axes"/></svg></button>
            <button class="tool" aria-label="3D 텍스트"><svg><use href="#i-text3d"/></svg></button>
            <hr>
            <button class="tool" aria-label="궤도"><svg><use href="#i-orbit"/></svg></button>
            <button class="tool" aria-label="이동 보기"><svg><use href="#i-pan"/></svg></button>
            <button class="tool" aria-label="확대/축소"><svg><use href="#i-zoom"/></svg></button>
            <button class="tool" aria-label="창 확대"><svg><use href="#i-zoomwin"/></svg></button>
            <button class="tool" aria-label="전체 보기"><svg><use href="#i-zoomext"/></svg></button>
            <button class="tool" aria-label="이전"><svg><use href="#i-prev"/></svg></button>
            <hr>
            <button class="tool" aria-label="카메라 배치"><svg><use href="#i-position"/></svg></button>
            <button class="tool" aria-label="둘러보기"><svg><use href="#i-look"/></svg></button>
            <button class="tool" aria-label="걷기"><svg><use href="#i-walk"/></svg></button>
            <button class="tool" aria-label="단면"><svg viewBox="0 0 32 32"><path d="M17 1l12 15-12 15z"/><circle cx="16" cy="16" r="10" fill="#fff" stroke="#111" stroke-width="1.300"/><path d="M2 16h27" stroke="#111" stroke-width="1.500"/><text x="13" y="14" class="sec">C</text><text x="10" y="23" class="sec">A-5</text></svg></button>
          </div>
        </div>
      </div>

      <!-- Model view -->
      <div class="viewport">
        <svg viewBox="90 117 1527 894" preserveAspectRatio="xMinYMin slice">
          <path d="M90 117H877L871 1011H90z" fill="#cececd"/>
          <path d="M90 667L875 339" stroke="#2fa52f" stroke-width="1"/>
          <path d="M876 117L874 480M873 690L871 1011" stroke="#000" stroke-width="2"/>
          <g stroke="#000" stroke-linejoin="round">
            <path d="M783 593L781 588 777 560 780 537 788 515 802 498 823 484 848 476 874 478 900 486 923 503 942 522 957 547 967 576 969 602 965 628 958 641z" fill="url(#rimShade)" stroke-width="2"/>
            <path d="M783 593L781 588 777 560 780 537 788 515 802 498 823 484 845 481 868 483 893 492 915 507 935 527 950 552 959 578 962 605 959 632 955 641z" fill="#fff" stroke-width="1"/>
            <path d="M783 593L781 588 777 560 780 537 788 515 802 498 823 484" fill="none" stroke-width="2"/>
            <path d="M770 602L845 553Q852 549 860 549 880 551 890 567 897 580 897 595 896 606 890 612L878 620z" fill="url(#knobShade)" stroke-width="1"/>
            <path d="M770 602L793 597 1167 697 1160 705 783 602z" fill="#bdbdbd" stroke="none"/>
            <path d="M770 602L783 602 1160 705 1153 783 783 672 Q775 670 767 662 757 652 755 640 752 630 754 619 756 609 770 602z" fill="#fff" stroke-width="1"/>
            <path d="M770 602Q756 609 754 619 752 630 755 640 757 652 767 662 775 670 783 672L1153 783" fill="none" stroke-width="2"/>
            <path d="M793 597L1167 697" stroke-width="2"/>
            <path d="M1160 705L1167 698 1158 777 1153 783z" fill="url(#dots)" stroke-width="1"/>
            <path d="M1125 687L1118 694 1112 772M1153 783L1158 777" fill="none" stroke-width="2"/>
          </g>
          <use href="#i-pushpull" x="1110" y="714" width="24" height="24"/>
          <path d="M1128 719h7M1131 715v7" stroke="#222" stroke-width="1.500"/>
        </svg>
      </div>

      <!-- Default tray -->
      <div class="tray">
        <header class="tray-title">
          <span>기본 트레이</span>
          <button class="pin" aria-label="자동 숨기기"><svg><use href="#i-pin"/></svg></button>
          <button class="close" aria-label="닫기">x</button>
        </header>
        <div class="tray-body">
          <div class="panels">
            <section class="entity">
              <div class="entity-head">
                <h2>면</h2>
                <button class="toggle" aria-label="자세히"><svg><use href="#i-expand"/></svg></button>
              </div>
              <div class="entity-info">
                <div class="thumb"></div>
                <div class="thumb"></div>
                <div class="fields">
                  <label for="layer">레이어(<u>L</u>):</label>
                  <div class="combo">
                    <select id="layer"><option>Layer0</option></select>
                  </div>
                  <label for="area">영역:</label>
                  <input id="area" type="text" value="80 mm²" readonly>
                </div>
              </div>
            </section>

            <section class="material">
              <div class="section-title">
                <h2>재질</h2>
                <button aria-label="패널 닫기">×</button>
              </div>
              <div class="material-head">
                <div class="preview"></div>
                <input type="text" value="기본값" aria-label="재질 이름" disabled>
                <div class="material-actions">
                  <button aria-label="보조 창"><svg width="12" height="18"><use href="#i-collapse"/></svg></button>
                  <button aria-label="재질 만들기"><svg width="22" height="22"><use href="#i-newmat"/></svg></button>
                  <button class="default" aria-label="기본 재질"></button>
                </div>
              </div>
              <div class="tabs">
                <button class="tab current">선택</button>
                <button class="tab">편집</button>
                <button class="dropper" aria-label="샘플 페인트"><svg><use href="#i-dropper"/></svg></button>
              </div>
              <div class="browse">
                <button aria-label="뒤로"><svg width="16" height="16"><use href="#i-back-arrow"/></svg></button>
                <button aria-label="앞으로"><svg width="16" height="16"><use href="#i-fwd-arrow"/></svg></button>
                <button aria-label="모델 안"><svg width="20" height="20"><use href="#i-home"/></svg></button>
                <div class="combo">
                  <select aria-label="모음"><option>색상</option></select>
                </div>
                <button aria-label="세부 정보"><svg width="18" height="18"><use href="#i-detail"/></svg></button>
              </div>
              <div class="list colors">
                <div class="cells">
                  <button class="c1" aria-label="색상 A01"></button>
                  <button class="c2" aria-label="색상 A02"></button>
                  <button class="c3" aria-label="색상 A03"></button>
                  <button class="c4" aria-label="색상 A04"></button>
                  <button class="c5" aria-label="색상 A05"></button>
                  <button class="c6" aria-label="색상 A06"></button>
                  <button class="c7" aria-label="색상 A07"></button>
                  <button class="c8" aria-label="색상 A08"></button>
                  <button class="c9" aria-label="색상 B01"></button>
                  <button class="c10" aria-label="색상 B02"></button>
                  <button class="c11" aria-label="색상 B03"></button>
                  <button class="c12" aria-label="색상 B04"></button>
                  <button class="c13" aria-label="색상 B05"></button>
                  <button class="c14" aria-label="색상 B06"></button>
                  <button class="c15" aria-label="색상 B07"></button>
                  <button class="c16" aria-label="색상 B08"></button>
                  <button class="c17" aria-label="색상 C01"></button>
                  <button class="c18" aria-label="색상 C02"></button>
                </div>
                <div class="scroll"><svg><use href="#i-chev-up"/></svg><i></i><svg><use href="#i-chev-down"/></svg></div>
              </div>
            </section>

            <section class="secondary">
              <h3>선택</h3>
              <div class="browse">
                <button aria-label="뒤로"><svg width="16" height="16"><use href="#i-back-arrow"/></svg></button>
                <button aria-label="앞으로"><svg width="16" height="16"><use href="#i-fwd-arrow"/></svg></button>
                <button aria-label="모델 안"><svg width="20" height="20"><use href="#i-home"/></svg></button>
                <div class="combo underlined">
                  <select aria-label="모음"><option>재질</option></select>
                </div>
                <button aria-label="세부 정보"><svg width="18" height="18"><use href="#i-detail"/></svg></button>
              </div>
              <div class="list folders">
                <div class="cells">
                  <button><svg><use href="#i-folder"/></svg><span>3D 인쇄</span></button>
                  <button><svg><use href="#i-folder"/></svg><span>금속</span></button>
                  <button><svg><use href="#i-folder"/></svg><span>목재</span></button>
                  <button aria-label="폴더"><svg><use href="#i-folder"/></svg></button>
                  <button aria-label="폴더"><svg><use href="#i-folder"/></svg></button>
                  <button aria-label="폴더"><svg><use href="#i-folder"/></svg></button>
                </div>
                <div class="scroll"><svg><use href="#i-chev-up"/></svg><i></i><svg><use href="#i-chev-down"/></svg></div>
              </div>
              <div class="bottom-edge"></div>
            </section>
          </div>
          <div class="scroll outer"><svg><use href="#i-chev-up"/></svg><i></i><svg><use href="#i-chev-down"/></svg></div>
        </div>
      </div>
    </div>

    <footer class="status">
      <svg viewBox="0 0 20 20"><circle cx="10" cy="10" r="8.500" fill="none" stroke="#a3a3a3" stroke-width="1.500"/><path d="M10 17L6 9a4 4 0 1 1 8 0z" fill="#8f8f8f"/></svg>
      <svg viewBox="0 0 20 20"><circle cx="10" cy="10" r="8.500" fill="none" stroke="#000" stroke-width="1.800"/><circle cx="10" cy="5" r="1.800"/><path d="M7 8h6v4h-1v5H8v-5H7z"/></svg>
      <svg viewBox="0 0 20 20"><circle cx="10" cy="10" r="8.500" fill="none" stroke="#a3a3a3" stroke-width="1.500"/><circle cx="10" cy="7" r="3.500" fill="#8f8f8f"/><path d="M4 16c0-6 12-6 12 0-3 3-9 3-12 0z" fill="#8f8f8f"/></svg>
      <span class="bar"></span>
      <p>끌어서 면을 밀거나 끌거나 값을 입력합니다. Ctrl = 새 시작 면 만들기 토글</p>
      <div class="measure">
        <label for="distance">거리</label>
        <input id="distance" type="text" value="10">
      </div>
    </footer>
  </div>
</body>
</html>
```
FILE: styles.css
```
* {
  box-sizing: border-box;
}
body {
  margin: 0;
  padding: 42px 0;
  height: 100vh;
  background: #000;
  color: #111;
  font-family: "Noto Sans", "Noto Sans CJK KR", sans-serif;
  font-size: 13px;
  overflow: hidden;
}
button, input, select {
  font: inherit;
  color: inherit;
  margin: 0;
  padding: 0;
  border: none;
  border-radius: 0;
  background: none;
}
svg {
  display: block;
  flex-shrink: 0;
}
h2, h3, p {
  margin: 0;
  font-weight: normal;
}
.sprite {
  position: absolute;
  width: 0;
  height: 0;
}
.a1 {
  font: 12px "Liberation Mono", monospace;
}
.sec {
  font: 7px "Liberation Sans", sans-serif;
}
.app {
  height: 100%;
  display: flex;
  flex-direction: column;
  background: #f0f0f0;
  overflow: hidden;
}

/* Menu */
.menu {
  display: flex;
  gap: 15px;
  height: 27px;
  padding-left: 7px;
  background: #fff;
  flex-shrink: 0;
}
.menu button {
  font-size: 16px;
  line-height: 27px;
  white-space: nowrap;
}

/* Top toolbar */
.toolbar {
  display: flex;
  height: 46px;
  flex-shrink: 0;
  background: #f3f3f3;
  border-bottom: 1px solid #a5a5a5;
  overflow: hidden;
}
.group {
  display: flex;
  align-items: center;
  flex-shrink: 0;
  border-right: 1px solid #b5b5b5;
}
.group.last {
  border-right: none;
}
.grip {
  width: 3px;
  height: 40px;
  margin: 0 4px 0 3px;
  background: repeating-linear-gradient(#b5b5b5 0 2px, transparent 2px 4px);
}
.tool {
  width: 42px;
  height: 42px;
  display: flex;
  align-items: center;
  justify-content: center;
}
.tool svg {
  width: 30px;
  height: 30px;
}
.tool.active {
  background: #c9e2f8;
  border: 1px solid #8fc4ef;
}
.tool.split {
  width: 64px;
  justify-content: flex-start;
  padding-left: 8px;
}
.tool.split::after {
  content: "";
  margin-left: 9px;
  border: 6px solid transparent;
  border-top: 7px solid #000;
  border-bottom: none;
}
.sep {
  width: 8px;
  height: 38px;
  background: linear-gradient(#8a8a8a, #8a8a8a) center / 1px 100% no-repeat;
}
.shell {
  color: #6c6b59;
}
.off {
  color: #bdbdbd;
}
.core {
  fill: var(--core, currentColor);
}
.off.wire {
  color: #f0f0f0;
  --core: #b5b5b5;
}
.off.light {
  color: #cfcfcf;
  --core: #f3f3f3;
}
.off.hole {
  --core: #f3f3f3;
}
.shadows .slider {
  align-self: flex-start;
  margin-top: 15px;
}
.slider.date {
  width: 146px;
  margin-left: 7px;
}
.slider.time {
  width: 116px;
  margin-left: 14px;
}
.slider input {
  display: block;
  width: 100%;
  height: 9px;
  appearance: none;
  border-top: 2px solid #8a8a8a;
  border-left: 1px solid #8a8a8a;
}
.date input {
  background: linear-gradient(90deg, #fff, #f6c11c 36%, #f20c00 66%, #f8a0a0 86%, #fff);
}
.time input {
  background: linear-gradient(90deg, #fff, #8fb5dc 40%, #6f8bf0 65%, #4c55b5);
}
.slider input::-webkit-slider-thumb {
  appearance: none;
  width: 5px;
  height: 13px;
  background: #f5f5f5;
  border-right: 1px solid #777;
}
.months {
  display: grid;
  grid-template-columns: repeat(12, 12px);
  text-align: center;
}
.months, .hours {
  font: bold 10px/12px "Liberation Sans", "Noto Sans CJK KR", sans-serif;
  color: #000;
}
.hours {
  display: grid;
  grid-template-columns: 64px 1fr;
}

/* Middle area */
.workspace {
  flex: 1;
  display: flex;
  min-height: 0;
}
.side {
  width: 88px;
  flex-shrink: 0;
}
.toolbox {
  padding: 4px 2px 1px;
  background: #f4f4f4;
  border-right: 1px solid #b5b5b5;
  border-bottom: 1px solid #b5b5b5;
}
.hgrip {
  display: block;
  height: 2px;
  margin-bottom: 4px;
  background: repeating-linear-gradient(90deg, #b5b5b5 0 2px, transparent 2px 4px);
}
.rows {
  display: grid;
  grid-template-columns: 42px 42px;
}
.rows hr {
  grid-column: 1 / 3;
  width: 80px;
  height: 1px;
  margin: 2px 0 5px 2px;
  border: none;
  background: #8a8a8a;
}
.viewport {
  flex: 1;
  min-width: 0;
  background: #fff;
  border-left: 2px solid #808080;
  border-top: 2px solid #696969;
  border-bottom: 1px solid #fff;
  border-right: 1px solid #e3e3e3;
}
.viewport svg {
  width: 100%;
  height: 100%;
}

/* Tray */
.tray {
  width: 297px;
  flex-shrink: 0;
  margin-left: 5px;
  display: flex;
  flex-direction: column;
}
.tray-title {
  display: flex;
  align-items: center;
  height: 27px;
  padding: 0 4px 1px;
  background: linear-gradient(#bccbdb, #d6e3f1);
  flex-shrink: 0;
}
.tray-title span {
  flex: 1;
  font-size: 15px;
}
.pin svg {
  width: 10px;
  height: 12px;
}
.close {
  width: 12px;
  height: 12px;
  margin-left: 7px;
  background: #c75050;
  color: #fff;
  font-size: 11px;
  font-weight: bold;
  line-height: 10px;
}
.tray-body {
  flex: 1;
  display: flex;
  min-height: 0;
}
.panels {
  flex: 1;
  display: flex;
  flex-direction: column;
  min-width: 0;
  border-right: 1px solid #fff;
}
.scroll {
  width: 20px;
  flex-shrink: 0;
  display: flex;
  flex-direction: column;
  align-items: center;
  padding: 5px 0;
  background: #f0f0f0;
}
.scroll svg {
  width: 12px;
  height: 12px;
}
.scroll i {
  width: 19px;
  height: 21px;
  margin: 4px 0 auto;
  background: #cdcdcd;
}
.scroll.outer {
  padding: 6px 0 4px;
}
.scroll.outer i {
  margin-top: 16px;
}

/* Entity info */
.entity {
  height: 175px;
  flex-shrink: 0;
}
.entity-head {
  display: flex;
  justify-content: space-between;
  height: 25px;
  padding: 2px 8px 0 11px;
  margin-bottom: 9px;
  background: linear-gradient(#9b9b9b, #9b9b9b) 2px 100% / 246px 1px no-repeat;
}
.entity-head h2 {
  font-size: 12px;
  line-height: 16px;
  font-weight: 500;
}
.toggle {
  align-self: flex-start;
}
.toggle svg {
  width: 12px;
  height: 17px;
}
.entity-info {
  display: flex;
  gap: 2px;
  padding-left: 7px;
}
.thumb {
  width: 35px;
  height: 60px;
  border: 1px solid #a0a0a0;
  background: linear-gradient(to top right, #a5b3bc 50%, #fff 51%) 0 12px / 100% 33px no-repeat;
}
.fields {
  flex: 1;
  display: grid;
  grid-template-columns: 1fr 119px;
  grid-auto-rows: 23px;
  gap: 5px;
  padding-right: 11px;
}
.fields label {
  text-align: right;
  line-height: 23px;
}
.fields input, .combo, .material-head input {
  border: 1px solid;
  border-color: #696969 #fff #fff #696969;
  box-shadow: inset 1px 1px 0 #b0b0b0;
  padding-left: 3px;
  min-width: 0;
}
.combo {
  position: relative;
  background: #fff;
}
.combo select {
  appearance: none;
  display: block;
  width: 100%;
  height: 100%;
}
.combo::after {
  content: "";
  position: absolute;
  top: 1px;
  right: 0;
  bottom: 0;
  width: 21px;
  background: #f0f0f0;
  border: 1px solid;
  border-color: #f8f8f8 #696969 #696969 #f8f8f8;
  pointer-events: none;
}
.combo::before {
  content: "";
  position: absolute;
  z-index: 1;
  top: 9px;
  right: 6px;
  border: 5px solid transparent;
  border-top: 5px solid #000;
  border-bottom: none;
  pointer-events: none;
}

/* Materials */
.material {
  flex: 1;
  display: flex;
  flex-direction: column;
  min-height: 0;
}
.section-title {
  display: flex;
  align-items: center;
  height: 23px;
  padding: 0 2px 0 9px;
  border: 1px solid #a8a8a8;
  background: linear-gradient(#e0e0e0, #b9b9b9);
  flex-shrink: 0;
}
.section-title::before {
  content: "";
  border: 5px solid transparent;
  border-top: 8px solid #000;
  border-bottom: none;
}
.section-title h2 {
  flex: 1;
  margin-left: 8px;
  font-size: 16px;
  line-height: 21px;
}
.section-title button {
  width: 16px;
  height: 17px;
  border: 1px solid #8a8a8a;
  background: #e8e8e8;
  font-size: 14px;
  line-height: 14px;
}
.material-head {
  display: flex;
  align-items: flex-start;
  height: 93px;
  padding: 2px 2px 0;
  border-bottom: 1px solid #9b9b9b;
  flex-shrink: 0;
}
.preview {
  width: 77px;
  height: 87px;
  border: 1px solid #a0a0a0;
  background: linear-gradient(to top right, #a5b3bc 50%, #fff 51%) 0 5px / 100% 75px no-repeat;
}
.material-head input {
  width: 161px;
  height: 23px;
  margin-left: 3px;
  padding-bottom: 2px;
  color: #777;
}
.material-actions {
  flex: 1;
  display: flex;
  flex-direction: column;
  align-items: center;
  gap: 8px;
  padding: 4px 0 0 5px;
}
.material-actions .default {
  width: 26px;
  height: 26px;
  background: linear-gradient(to top right, #a5b3bc 50%, #fff 51%);
}
.tabs {
  display: flex;
  align-items: flex-end;
  height: 31px;
  padding-right: 5px;
  flex-shrink: 0;
}
.tab {
  width: 46px;
  height: 20px;
  padding: 0 0 2px 4px;
  font-size: 12px;
  line-height: 16px;
  text-align: left;
  border-top: 1px solid #fff;
  border-right: 2px solid #777;
}
.tab.current {
  width: 51px;
  height: 22px;
  padding: 0 0 4px 7px;
  border-left: 1px solid #fff;
}
.dropper {
  margin: 0 0 4px auto;
}
.dropper svg {
  width: 20px;
  height: 20px;
}
.browse {
  display: flex;
  align-items: center;
  height: 35px;
  padding: 0 5px 4px 8px;
  border-bottom: 1px solid #8f8f8f;
  flex-shrink: 0;
}
.browse button {
  margin-right: 11px;
}
.browse button:nth-child(3) {
  margin-right: 6px;
}
.browse .combo {
  flex: 1;
  height: 26px;
  margin-top: 6px;
  padding-left: 4px;
  font-size: 12px;
}
.browse .combo::before {
  top: 11px;
}
.browse .combo + button {
  margin: 0 0 0 8px;
}
.underlined select {
  width: calc(100% - 25px);
  height: 23px;
  border-bottom: 1px solid #000;
}
.list {
  display: flex;
  background: #fff;
  overflow: hidden;
}
.colors {
  flex: 1;
  min-height: 0;
}
.cells {
  flex: 1;
  display: grid;
  grid-template-columns: repeat(3, 62px);
  grid-auto-rows: 62px;
  gap: 2px;
  padding: 2px 3px;
}
.cells button {
  border: 1px solid #9a9a9a;
  padding: 1px;
  background-clip: content-box;
}
.c1 { background-color: #ffcccc; }
.c2 { background-color: #ff9999; }
.c3 { background-color: #ff6666; }
.c4 { background-color: #ff3333; }
.c5 { background-color: #ff0000; }
.c6 { background-color: #cc0000; }
.c7 { background-color: #990000; }
.c8 { background-color: #660000; }
.c9 { background-color: #ffd9cc; }
.c10 { background-color: #ffb399; }
.c11 { background-color: #ff8f66; }
.c12 { background-color: #ff6633; }
.c13 { background-color: #ff4000; }
.c14 { background-color: #cc3300; }
.c15 { background-color: #992600; }
.c16 { background-color: #661a00; }
.c17 { background-color: #ffe6cc; }
.c18 { background-color: #ffcc99; }

/* Second pane */
.secondary {
  flex-shrink: 0;
  margin-top: 2px;
  border-top: 2px solid #777;
}
.secondary h3 {
  height: 23px;
  margin-top: 3px;
  padding-left: 4px;
  font-size: 12px;
  line-height: 20px;
  background: #e4e4e4;
  border-top: 1px solid #a8a8a8;
  border-bottom: 1px solid #a8a8a8;
}
.folders {
  height: 105px;
}
.folders .cells button {
  position: relative;
}
.folders .cells svg {
  width: 40px;
  height: 36px;
  margin: -2px 0 0 8px;
}
.folders .cells span {
  position: absolute;
  left: 1px;
  bottom: 2px;
  padding: 0 2px;
  background: #fff;
  font-size: 12px;
  line-height: 17px;
}
.bottom-edge {
  height: 6px;
  margin-top: 1px;
  border: 1px solid #a8a8a8;
}

/* Status bar */
.status {
  display: flex;
  align-items: center;
  height: 26px;
  padding: 7px 5px 0;
  flex-shrink: 0;
  overflow: hidden;
}
.status > svg {
  width: 20px;
  height: 20px;
  margin-right: 15px;
}
.bar {
  width: 1px;
  height: 14px;
  margin-left: -3px;
  background: #999;
}
.status p {
  flex: 1;
  margin-left: 10px;
  font-size: 17px;
  line-height: 20px;
  white-space: nowrap;
}
.measure {
  display: flex;
  align-items: center;
  width: 303px;
  height: 26px;
  margin-top: 2px;
  border-left: 1px solid #999;
  font-size: 17px;
}
.measure label {
  width: 52px;
  padding-left: 11px;
}
.measure input {
  flex: 1;
  min-width: 0;
  height: 26px;
  padding-left: 4px;
  font-size: 16px;
  background: #ffffe1;
  border: 1px solid #abb8c4;
}
```
